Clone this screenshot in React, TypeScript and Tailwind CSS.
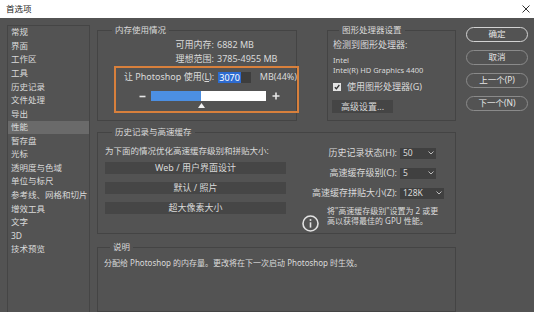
import type { ReactNode } from 'react';

const navItems = [
  '常规',
  '界面',
  '工作区',
  '工具',
  '历史记录',
  '文件处理',
  '导出',
  '性能',
  '暂存盘',
  '光标',
  '透明度与色域',
  '单位与标尺',
  '参考线、网格和切片',
  '增效工具',
  '文字',
  '3D',
  '技术预览',
];

function GroupBox({
  title,
  className,
  legendClass,
  children,
}: {
  title: string;
  className: string;
  legendClass: string;
  children: ReactNode;
}) {
  return (
    <fieldset className={`min-w-0 border border-[#444444] ${className}`}>
      <legend className={`px-[3px] text-[8.5px] leading-[12px] ${legendClass}`}>{title}</legend>
      {children}
    </fieldset>
  );
}

function Select({ value, width }: { value: string; width: string }) {
  return (
    <div className={`ml-[3px] flex h-[11px] items-center bg-[#404040] ${width}`}>
      <span className="flex-1 pl-[3px] text-[8.5px] leading-none">{value}</span>
      <span className="flex h-full w-[10px] items-center justify-center">
        <svg width="6" height="4" viewBox="0 0 6 4">
          <path d="M0.5 0.5L3 3L5.5 0.5" stroke="#bdbdbd" strokeWidth="1" fill="none" />
        </svg>
      </span>
    </div>
  );
}

function HistoryRow({ label, children }: { label: string; children: ReactNode }) {
  return (
    <div className="flex h-[20px] items-center">
      <span className="w-[97px] text-right text-[9px] whitespace-nowrap">{label}</span>
      {children}
    </div>
  );
}

export default function App() {
  return (
    <div className="h-[312px] w-[534px] overflow-hidden bg-[#535353] font-['Noto_Sans','Noto_Sans_CJK_SC',sans-serif] text-[#dadada]">
      {/* Title bar */}
      <div className="flex h-[18px] items-center justify-between bg-white pl-[6px] pr-[4px] text-[#222222]">
        <span className="text-[8.5px]">首选项</span>
        <svg width="8" height="8" viewBox="0 0 8 8">
          <path d="M0.5 0.5L7.5 7.5M7.5 0.5L0.5 7.5" stroke="#333" strokeWidth="1" />
        </svg>
      </div>

      <div className="flex h-[294px]">
        {/* Sidebar */}
        <div className="ml-[7px] mt-[7px] h-[300px] w-[83px] border border-[#454545]">
          {navItems.map((item) => (
            <div
              key={item}
              className={`flex h-[13.56px] items-center pl-[3px] text-[8.5px] whitespace-nowrap ${
                item === '性能' ? 'bg-[#6a6a6a]' : ''
              }`}
            >
              {item}
            </div>
          ))}
        </div>

        {/* Main */}
        <div className="ml-[7px] flex w-[359px] flex-col">
          <div className="mt-[6px] flex gap-[30px]">
            {/* Memory */}
            <GroupBox title="内存使用情况" className="h-[97px] w-[200px]" legendClass="ml-[14px]">
              <div className="pt-[2px] text-[9px]">
                <div className="flex h-[14px] items-center">
                  <span className="w-[116px] text-right">可用内存:</span>
                  <span className="ml-[3px]">6882 MB</span>
                </div>
                <div className="flex h-[14px] items-center">
                  <span className="w-[116px] text-right">理想范围:</span>
                  <span className="ml-[3px]">3785-4955 MB</span>
                </div>
              </div>
              <div className="ml-[16px] h-[47px] w-[185px] border-2 border-[#d8803c]">
                <div className="mt-[3px] flex h-[12px] items-center pl-[8px] text-[9px] whitespace-nowrap">
                  <span>
                    让 Photoshop 使用(<span className="underline">L</span>):
                  </span>
                  <span className="ml-[4px] flex h-[11px] w-[34px] items-center bg-[#3d3d3d]">
                    <span className="bg-[#2d6bd0] px-[1px] leading-[11px] text-white">3070</span>
                  </span>
                  <span className="ml-[9px]">MB(44%)</span>
                </div>
                <div className="mt-[8px] flex h-[10px] items-center pl-[22px]">
                  <svg className="ml-[1px]" width="7" height="7" viewBox="0 0 7 7">
                    <path d="M0.5 3.5H6.5" stroke="#e6e6e6" strokeWidth="1.6" />
                  </svg>
                  <div className="relative ml-[5px] h-[10px] w-[115px] bg-white">
                    <div className="h-full w-[50px] bg-[#4c8fe2]" />
                    <svg className="absolute left-[47px] top-[12px]" width="7" height="5" viewBox="0 0 7 5">
                      <polygon points="3.5,0 7,5 0,5" fill="#f2f2f2" />
                    </svg>
                  </div>
                  <svg className="ml-[6px]" width="8" height="8" viewBox="0 0 8 8">
                    <path d="M0.5 4H7.5M4 0.5V7.5" stroke="#e6e6e6" strokeWidth="1.6" />
                  </svg>
                </div>
              </div>
            </GroupBox>

            {/* GPU */}
            <GroupBox title="图形处理器设置" className="h-[97px] w-[129px]" legendClass="ml-[11px]">
              <div className="pl-[5px] pt-[2px]">
                <div className="flex h-[14px] items-center text-[9px]">检测到图形处理器:</div>
                <div className="mt-[4px] flex h-[10px] items-center text-[7.5px]">Intel</div>
                <div className="flex h-[10px] items-center text-[7.5px] whitespace-nowrap">
                  Intel(R) HD Graphics 4400
                </div>
                <div className="mt-[5px] flex h-[12px] items-center">
                  <span className="flex h-[8px] w-[8px] items-center justify-center bg-[#e4e4e4]">
                    <svg width="6" height="6" viewBox="0 0 6 6">
                      <path d="M0.8 3.2L2.4 4.8L5.3 1" stroke="#333" strokeWidth="1.3" fill="none" />
                    </svg>
                  </span>
                  <span className="ml-[6px] text-[9px] whitespace-nowrap">使用图形处理器(G)</span>
                </div>
                <div className="ml-[-1px] mt-[7px] flex h-[13px] w-[61px] items-center justify-center bg-[#454545] text-[9px]">
                  高级设置...
                </div>
              </div>
            </GroupBox>
          </div>

          {/* History & cache */}
          <GroupBox title="历史记录与高速缓存" className="mt-[5px] h-[122px] w-[359px]" legendClass="ml-[14px]">
            <div className="flex">
              <div className="w-[190px] pl-[7px] pt-[7px]">
                <div className="flex h-[12px] items-center text-[8.5px] whitespace-nowrap">
                  为下面的情况优化高速缓存级别和拼贴大小:
                </div>
                <div className="mt-[5px] flex flex-col gap-[8px]">
                  {['Web / 用户界面设计', '默认 / 照片', '超大像素大小'].map((b) => (
                    <div
                      key={b}
                      className="flex h-[12px] w-[181px] items-center justify-center bg-[#464646] text-[9px]"
                    >
                      {b}
                    </div>
                  ))}
                </div>
              </div>
              <div className="ml-[12px] pt-[5px]">
                <HistoryRow label="历史记录状态(H):">
                  <Select value="50" width="w-[36px]" />
                </HistoryRow>
                <HistoryRow label="高速缓存级别(C):">
                  <Select value="5" width="w-[36px]" />
                </HistoryRow>
                <HistoryRow label="高速缓存拼贴大小(Z):">
                  <Select value="128K" width="w-[44px]" />
                </HistoryRow>
                <div className="mt-[3px] flex items-start">
                  <svg className="ml-[2px] mt-[9px]" width="17" height="17" viewBox="0 0 17 17">
                    <circle cx="8.5" cy="8.5" r="7.5" stroke="#e2e2e2" strokeWidth="1.6" fill="none" />
                    <circle cx="8.5" cy="5" r="1" fill="#e2e2e2" />
                    <path d="M8.5 7.3V12.6" stroke="#e2e2e2" strokeWidth="1.6" />
                  </svg>
                  <div className="ml-[8px] text-[8px] leading-[9.5px] whitespace-nowrap">
                    将"高速缓存级别"设置为 2 或更
                    <br />
                    高以获得最佳的 GPU 性能。
                  </div>
                </div>
              </div>
            </div>
          </GroupBox>

          {/* Description */}
          <GroupBox title="说明" className="mt-[7px] h-[80px] w-[359px]" legendClass="ml-[12px]">
            <div className="pl-[6px] pt-[4px] text-[8px] leading-[12px] whitespace-nowrap">
              分配给 Photoshop 的内存量。更改将在下一次启动 Photoshop 时生效。
            </div>
          </GroupBox>
        </div>

        {/* Buttons */}
        <div className="ml-[10px] mt-[9px] flex w-[62px] flex-col gap-[8px]">
          <button className="h-[15px] w-full rounded-full border border-[#d2d2d2] text-[8.5px] leading-none text-[#e6e6e6]">
            确定
          </button>
          <button className="h-[15px] w-full rounded-full border border-[#8a8a8a] text-[8.5px] leading-none text-[#e6e6e6]">
            取消
          </button>
          <button className="h-[15px] w-full rounded-full border border-[#8a8a8a] text-[8.5px] leading-none text-[#e6e6e6]">
            上一个(P)
          </button>
          <button className="h-[15px] w-full rounded-full border border-[#8a8a8a] text-[8.5px] leading-none text-[#e6e6e6]">
            下一个(N)
          </button>
        </div>
      </div>
    </div>
  );
}
